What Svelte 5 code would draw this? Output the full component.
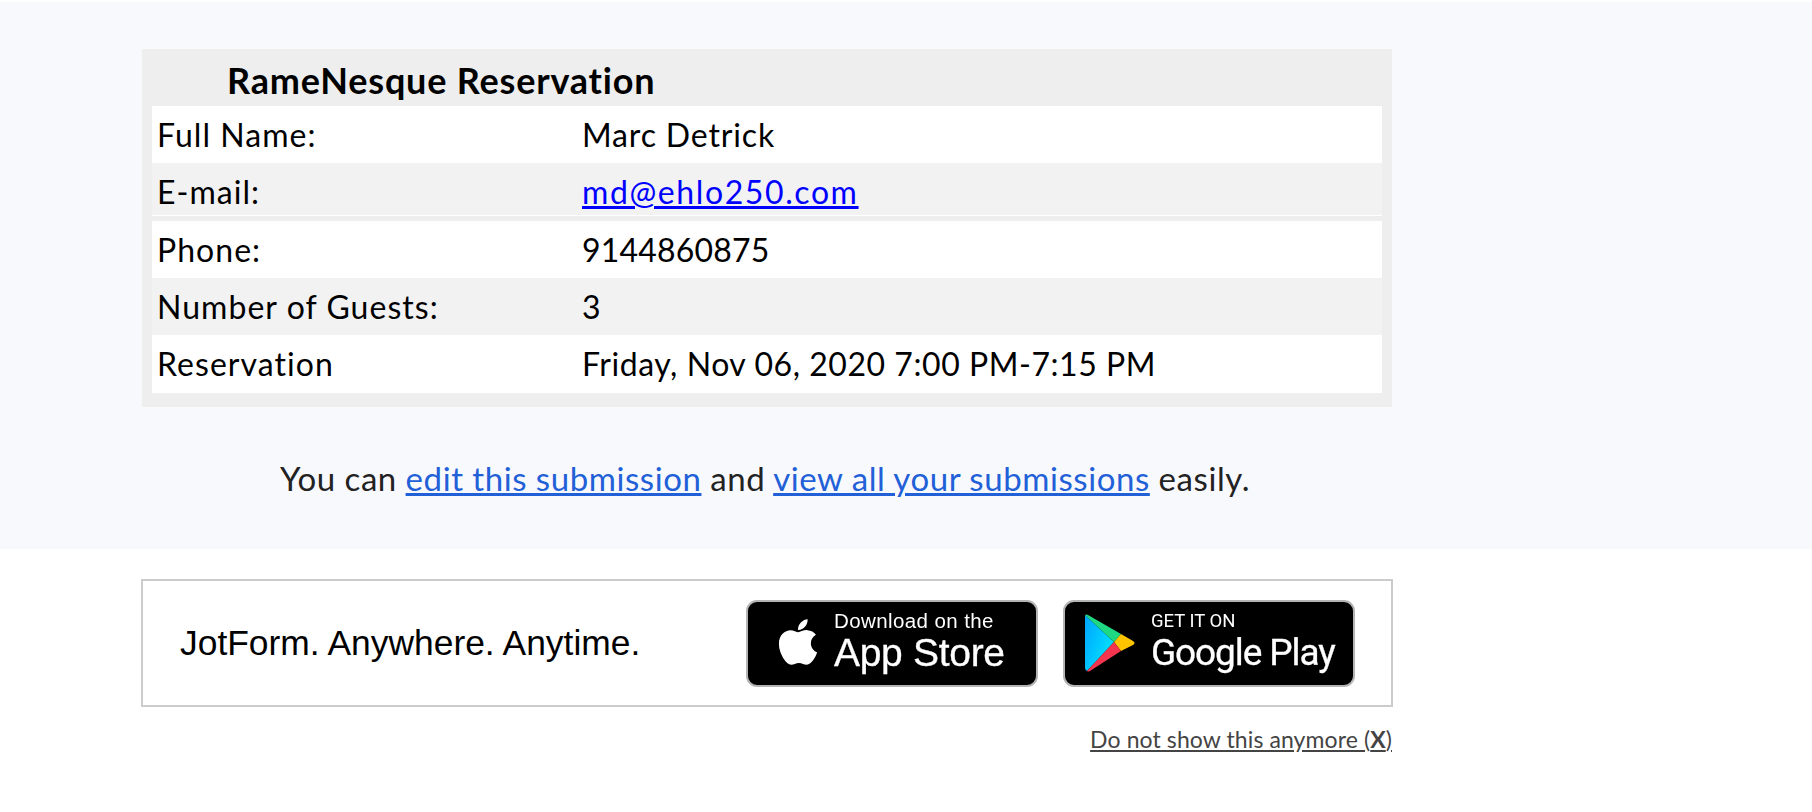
<script>
  const rows = [
    { label: 'Full Name:', value: 'Marc Detrick', cls: 'r1' },
    { label: 'E-mail:', value: 'md@ehlo250.com', link: true, cls: 'r2' },
    { label: 'Phone:', value: '9144860875', cls: 'r3' },
    { label: 'Number of Guests:', value: '3', cls: 'r4' },
    { label: 'Reservation', value: 'Friday, Nov 06, 2020 7:00 PM-7:15 PM', cls: 'r5' }
  ];
</script>

<div class="page">
  <section class="hero">
    <div class="card">
      <h1>RameNesque Reservation</h1>
      {#each rows as row}
        <div class="row {row.cls}">
          <span class="label">{row.label}</span>
          {#if row.link}
            <a class="mail" href="#mail">{row.value}</a>
          {:else}
            <span class="value">{row.value}</span>
          {/if}
        </div>
      {/each}
    </div>
    <p class="note">You can <a href="#edit">edit this submission</a> and <a href="#all">view all your submissions</a> easily.</p>
  </section>

  <section class="promo">
    <span class="tag">JotForm. Anywhere. Anytime.</span>
    <div class="badges">
      <div class="badge apple">
        <svg class="apple-icon" viewBox="0 0 384 512" aria-hidden="true"><path fill="#fff" d="M318.7 268.7c-.2-36.7 16.4-64.4 50-84.8-18.8-26.9-47.2-41.7-84.7-44.6-35.5-2.8-74.3 20.7-88.5 20.7-15 0-49.4-19.7-76.4-19.7C63.3 141.2 4 184.8 4 273.5q0 39.3 14.4 81.2c12.8 36.7 59 126.7 107.2 125.2 25.2-.6 43-17.9 75.8-17.9 31.8 0 48.3 17.9 76.4 17.9 48.6-.7 90.4-82.5 102.6-119.3-65.2-30.7-61.7-90-61.7-91.9zm-56.6-164.2c27.3-32.4 24.8-61.9 24-72.5-24.1 1.4-52 16.4-67.9 34.9-17.5 19.8-27.8 44.3-25.6 71.9 26.1 2 49.9-11.4 69.5-34.3z"/></svg>
        <div class="btext">
          <span class="small">Download on the</span>
          <span class="big">App Store</span>
        </div>
      </div>
      <div class="badge play">
        <svg class="play-icon" viewBox="0 0 50 58" aria-hidden="true">
          <defs>
            <linearGradient id="pb" x1="0" y1="0" x2="1" y2="0.6"><stop offset="0" stop-color="#00a4ff"/><stop offset="1" stop-color="#00e3ff"/></linearGradient>
          </defs>
          <path fill="url(#pb)" d="M0 1 L29 28 L2 57 Q0 56 0 54 Z"/>
          <path fill="#1fd882" d="M0 1 Q1 0 3 1 L36 20 L29 28 Z"/>
          <path fill="#ffc400" d="M36 20 L48 27 Q51 29 48 31 L36 37 L29 28 Z"/>
          <path fill="#f5344e" d="M29 28 L36 37 L5 57 Q3 58 2 57 Z"/>
        </svg>
        <div class="btext gpwrap">
          <span class="small gp">GET IT ON</span>
          <span class="big gp">Google Play</span>
        </div>
      </div>
    </div>
  </section>
  <div class="dismiss"><a href="#hide">Do not show this anymore (<b>X</b>)</a></div>
</div>

<style>
  :global(body) { margin: 0; background: #fff; }
  .page { padding-top: 2px; font-family: Lato, "Open Sans", sans-serif; color: #000; height: 810px; overflow: hidden; }
  .hero { background: #f8f9fd; height: 547px; box-sizing: border-box; padding: 47px 0 0 142px; }
  .card { width: 1250px; box-sizing: border-box; background: #eeeeee; padding: 0 10px 14px; font-size: 32px; letter-spacing: .55px; }
  h1 { margin: 0; height: 57px; box-sizing: border-box; padding: 11px 0 0 75px; font-size: 36px; letter-spacing: .8px; line-height: 40px; font-weight: 700; }
  .row { display: grid; grid-template-columns: 425px 1fr; padding-left: 5px; align-items: center; line-height: 40px; }
  .label { letter-spacing: 1.05px; }
  .r1, .r3, .r5 { background: #fff; }
  .r1, .r3, .r4 { height: 57px; }
  .r5 { height: 58px; }
  .r2 { height: 52px; background: #f2f2f2; box-shadow: 0 1px 0 #fff; margin-bottom: 6px; padding-top: 6px; box-sizing: border-box; }
  .r4 { background: #f2f2f2; }
  .r1 .value { letter-spacing: .85px; }
  .r3 .value { letter-spacing: .2px; }
  .mail { color: #0000ff; justify-self: start; letter-spacing: 1.6px; }
  .note { margin: 0; padding: 0 0 0 138px; font-size: 33px; letter-spacing: .58px; line-height: 40px; margin-top: 51px; color: #222; word-spacing: -.3px; }
  .note a { color: #2260d8; }
  .promo { margin: 30px 0 0 141px; width: 1252px; height: 128px; box-sizing: border-box; border: 2px solid #ccc; display: flex; align-items: center; padding-left: 37px; position: relative; }
  .tag { font-family: "Liberation Sans", Arial, sans-serif; font-size: 35.4px; width: 566px; }
  .badges { display: flex; gap: 25px; }
  .badge { width: 292px; height: 87px; box-sizing: border-box; background: #000; border: 2px solid #b4b4b4; border-radius: 11px; display: flex; align-items: center; color: #fff; font-family: "Liberation Sans", Arial, sans-serif; filter: blur(.35px); }
  .apple-icon { width: 40px; height: 52px; margin: -2px 16px 0 30px; }
  .play-icon { width: 50px; height: 58px; margin: 0 18px 0 20px; }
  .btext { display: flex; flex-direction: column; margin-top: -5px; }
  .small { font-size: 20.5px; line-height: 24px; letter-spacing: .4px; }
  .big { font-size: 39px; line-height: 40px; letter-spacing: -.3px; -webkit-text-stroke: .3px #fff; }
  .small.gp { font-family: Roboto, sans-serif; font-size: 18.5px; letter-spacing: 0; }
  .big.gp { font-family: Roboto, sans-serif; font-size: 37px; letter-spacing: -1.1px; }
  .gpwrap { margin-left: -2px; }
  .dismiss { margin: 17px 0 0 142px; width: 1250px; text-align: right; font-size: 23px; letter-spacing: .1px; line-height: 30px; color: #444; }
  .dismiss a { color: #444; }
</style>
